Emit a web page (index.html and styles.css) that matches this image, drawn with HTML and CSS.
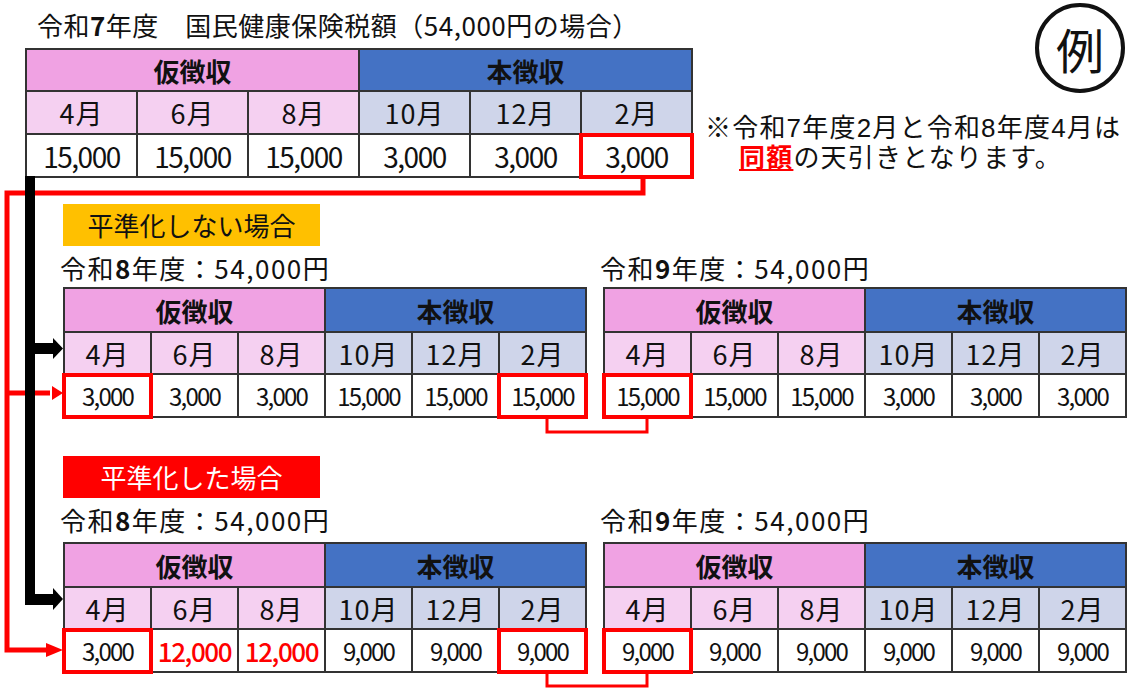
FILE: index.html
```html
<!DOCTYPE html>
<html lang="ja">
<head>
<meta charset="utf-8">
<title>令和7年度 国民健康保険税額</title>
<link rel="stylesheet" href="styles.css">
</head>
<body>
<div class="page">
  <section class="top">
    <div class="top-main">
      <h1 class="title">令和<b>7</b>年度　国民健康保険税額（54,000円の場合）</h1>
      <table class="tax tax-top">
        <tr><th colspan="3" class="kari">仮徴収</th><th colspan="3" class="hon">本徴収</th></tr>
        <tr class="months"><td class="m-kari">4月</td><td class="m-kari">6月</td><td class="m-kari">8月</td><td class="m-hon">10月</td><td class="m-hon">12月</td><td class="m-hon">2月</td></tr>
        <tr class="vals"><td>15,000</td><td>15,000</td><td>15,000</td><td>3,000</td><td>3,000</td><td class="hl">3,000</td></tr>
      </table>
    </div>
    <div class="top-side">
      <div class="rei">例</div>
      <p class="note"><span class="line">※令和7年度2月と令和8年度4月は</span><span class="line indent"><span class="same">同額</span>の天引きとなります。</span></p>
    </div>
  </section>

  <section class="case case-1">
    <div class="tag tag-orange">平準化しない場合</div>
    <div class="pair">
      <div class="year">
        <p class="cap">令和<b>8</b>年度：54,000円</p>
        <table class="tax tax-sub">
          <tr><th colspan="3" class="kari">仮徴収</th><th colspan="3" class="hon">本徴収</th></tr>
          <tr class="months"><td class="m-kari">4月</td><td class="m-kari">6月</td><td class="m-kari">8月</td><td class="m-hon">10月</td><td class="m-hon">12月</td><td class="m-hon">2月</td></tr>
          <tr class="vals"><td class="hl">3,000</td><td>3,000</td><td>3,000</td><td>15,000</td><td>15,000</td><td class="hl">15,000</td></tr>
        </table>
      </div>
      <div class="year">
        <p class="cap">令和<b>9</b>年度：54,000円</p>
        <table class="tax tax-sub">
          <tr><th colspan="3" class="kari">仮徴収</th><th colspan="3" class="hon">本徴収</th></tr>
          <tr class="months"><td class="m-kari">4月</td><td class="m-kari">6月</td><td class="m-kari">8月</td><td class="m-hon">10月</td><td class="m-hon">12月</td><td class="m-hon">2月</td></tr>
          <tr class="vals"><td class="hl">15,000</td><td>15,000</td><td>15,000</td><td>3,000</td><td>3,000</td><td>3,000</td></tr>
        </table>
      </div>
    </div>
  </section>

  <section class="case case-2">
    <div class="tag tag-red">平準化した場合</div>
    <div class="pair">
      <div class="year">
        <p class="cap">令和<b>8</b>年度：54,000円</p>
        <table class="tax tax-sub">
          <tr><th colspan="3" class="kari">仮徴収</th><th colspan="3" class="hon">本徴収</th></tr>
          <tr class="months"><td class="m-kari">4月</td><td class="m-kari">6月</td><td class="m-kari">8月</td><td class="m-hon">10月</td><td class="m-hon">12月</td><td class="m-hon">2月</td></tr>
          <tr class="vals"><td class="hl">3,000</td><td class="up">12,000</td><td class="up">12,000</td><td>9,000</td><td>9,000</td><td class="hl">9,000</td></tr>
        </table>
      </div>
      <div class="year">
        <p class="cap">令和<b>9</b>年度：54,000円</p>
        <table class="tax tax-sub">
          <tr><th colspan="3" class="kari">仮徴収</th><th colspan="3" class="hon">本徴収</th></tr>
          <tr class="months"><td class="m-kari">4月</td><td class="m-kari">6月</td><td class="m-kari">8月</td><td class="m-hon">10月</td><td class="m-hon">12月</td><td class="m-hon">2月</td></tr>
          <tr class="vals"><td class="hl">9,000</td><td>9,000</td><td>9,000</td><td>9,000</td><td>9,000</td><td>9,000</td></tr>
        </table>
      </div>
    </div>
  </section>

  <svg class="links" width="1133" height="694" viewBox="0 0 1133 694" aria-hidden="true">
    <g fill="none" stroke="#ff0000" stroke-width="5">
      <polyline points="643,177 643,193 7,193 7,650 48,650"/>
      <line x1="7" y1="393" x2="50" y2="393"/>
    </g>
    <g fill="#ff0000">
      <polygon points="46,643 63,650 46,657"/>
      <polygon points="52,386 63,393 52,400"/>
    </g>
    <g fill="none" stroke="#ff0000" stroke-width="3">
      <polyline points="547,418 547,432 647,432 647,418"/>
      <polyline points="547,673 547,686 647,686 647,673"/>
    </g>
    <g fill="#000">
      <rect x="25" y="176" width="10" height="429"/>
      <rect x="25" y="594" width="29" height="11"/>
      <polygon points="53,588 63,599 53,610"/>
      <rect x="35" y="343" width="19" height="11"/>
      <polygon points="53,338 63,348.5 53,359"/>
    </g>
  </svg>
</div>
</body>
</html>
```

FILE: styles.css
```css
* { box-sizing: border-box; }

html, body {
  margin: 0;
  padding: 0;
  background: #ffffff;
}

body {
  font-family: "Noto Sans CJK JP", "Noto Sans", sans-serif;
  color: #111111;
}

.page {
  position: relative;
  width: 1133px;
  height: 694px;
  overflow: hidden;
  padding-top: 8px;
}

/* ---------- top block ---------- */
.top {
  display: flex;
  padding-left: 25px;
}

.top-main {
  width: 668px;
}

.title {
  margin: 0 0 6px;
  padding-left: 12px;
  font-size: 26px;
  font-weight: 400;
  line-height: 34px;
  white-space: nowrap;
  letter-spacing: 0.5px;
}

.title b,
.cap b {
  font-weight: 700;
}

.top-side {
  width: 424px;
  margin-left: 12px;
  margin-top: -5px;
  display: flex;
  flex-direction: column;
}

.rei {
  align-self: flex-end;
  width: 90px;
  height: 90px;
  border: 4px solid #111111;
  border-radius: 50%;
  display: flex;
  align-items: center;
  justify-content: center;
  font-size: 48px;
  line-height: 1;
  margin-right: 4px;
}

.note {
  margin: 20px 0 0;
  font-family: "Liberation Sans", "Noto Sans CJK JP", sans-serif;
  font-size: 26px;
  white-space: nowrap;
  letter-spacing: 1.2px;
}

.note .line {
  display: block;
  height: 30px;
  line-height: 30px;
}

.note .indent {
  padding-left: 34px;
}

.same {
  color: #ff0000;
  font-weight: 700;
  text-decoration: underline;
  text-decoration-thickness: 2px;
  text-underline-offset: 2px;
}

/* ---------- tables ---------- */
.tax {
  border-collapse: collapse;
  table-layout: fixed;
}

.tax th,
.tax td {
  border: 2px solid #333333;
  padding: 0;
  text-align: center;
  white-space: nowrap;
}

.tax th {
  font-size: 26px;
  font-weight: 700;
}

.kari { background: #f0a2e3; }
.hon { background: #4472c4; }
.m-kari { background: #f5d0f1; }
.m-hon { background: #cfd5ea; }

.months td {
  font-size: 27px;
  font-weight: 400;
  letter-spacing: 1px;
}

.vals td {
  background: #ffffff;
}

.tax-top { width: 668px; }
.tax-top th { height: 42px; }
.tax-top .months td { height: 43px; }
.tax-top .vals td {
  height: 43px;
  font-size: 28px;
  letter-spacing: -1.5px;
}

.tax-sub { width: 524px; }
.tax-sub th { height: 44px; }
.tax-sub .months td { height: 42px; }
.tax-sub .vals td {
  height: 43px;
  font-size: 24px;
  letter-spacing: -1.8px;
}

.tax-sub .vals td.up {
  color: #ff0000;
  font-size: 26px;
  font-weight: 500;
  letter-spacing: -1.4px;
}

.hl {
  position: relative;
}

.hl::after {
  content: "";
  position: absolute;
  top: -2px;
  left: -3px;
  right: -3px;
  bottom: -3px;
  border: 4px solid #ff0000;
  pointer-events: none;
}

/* ---------- cases ---------- */
.case {
  padding-left: 63px;
}

.case-1 { margin-top: 26px; }
.case-2 { margin-top: 38px; }

.tag {
  width: 257px;
  height: 42px;
  font-size: 26px;
  line-height: 42px;
  text-align: center;
}

.tag-orange {
  background: #ffc000;
  color: #111111;
}

.tag-red {
  background: #ff0000;
  color: #ffffff;
}

.pair {
  display: flex;
  gap: 16px;
}

.cap {
  margin: 5px 0 2px -3px;
  font-size: 26px;
  line-height: 34px;
  white-space: nowrap;
  letter-spacing: 1.5px;
}

.case-2 .cap {
  margin-bottom: 5px;
}

/* ---------- connectors ---------- */
.links {
  position: absolute;
  left: 0;
  top: 0;
  pointer-events: none;
}
```
